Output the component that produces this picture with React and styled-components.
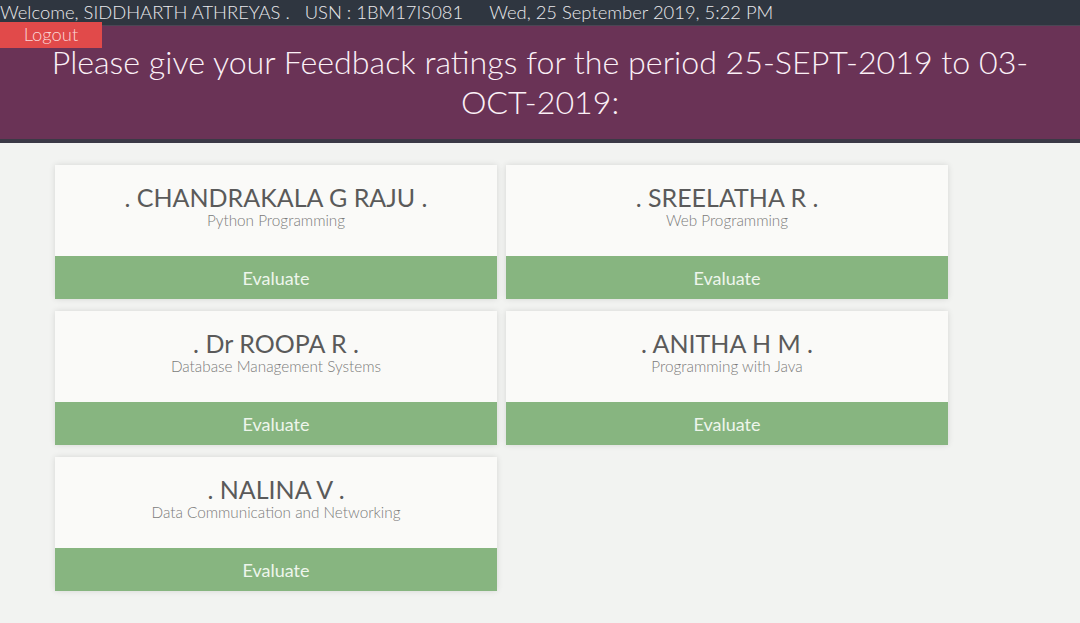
import styled, { createGlobalStyle } from 'styled-components';

const GlobalStyle = createGlobalStyle`
  html, body {
    margin: 0;
    padding: 0;
    background: #f2f3f1;
    font-family: Lato, "Open Sans", sans-serif;
  }
`;

const faculty = [
  { name: 'CHANDRAKALA G RAJU', subject: 'Python Programming' },
  { name: 'SREELATHA R', subject: 'Web Programming' },
  { name: 'Dr ROOPA R', subject: 'Database Management Systems' },
  { name: 'ANITHA H M', subject: 'Programming with Java' },
  { name: 'NALINA V', subject: 'Data Communication and Networking' },
];

const App = () => {
  return (
    <Page>
      <GlobalStyle />
      <TopBar>
        <span>Welcome, SIDDHARTH ATHREYAS .&nbsp;&nbsp; USN : 1BM17IS081</span>
        <DateText>Wed, 25 September 2019, 5:22 PM</DateText>
      </TopBar>
      <Banner>
        <LogoutButton>Logout</LogoutButton>
        <Title>Please give your Feedback ratings for the period 25-SEPT-2019 to 03-OCT-2019:</Title>
      </Banner>
      <CardGrid>
        {faculty.map(f => (
          <Card key={f.name}>
            <CardBody>
              <Name>. {f.name} .</Name>
              <Subject>{f.subject}</Subject>
            </CardBody>
            <EvaluateButton>Evaluate</EvaluateButton>
          </Card>
        ))}
      </CardGrid>
    </Page>
  );
};

const Page = styled.div`
  min-height: 100vh;
  background: #f2f3f1;
`;

const TopBar = styled.div`
  display: flex;
  align-items: center;
  height: 26px;
  background: #2f3640;
  color: #e9e9ec;
  font-size: 18.4px;
  font-weight: 300;
  white-space: nowrap;
  line-height: 22px;
  padding-bottom: 2px;
  box-sizing: border-box;
  border-bottom: 1px solid #4a4654;
`;

const DateText = styled.span`
  margin-left: 26px;
`;

const Banner = styled.div`
  display: flow-root;
  background: #6a3356;
  border-bottom: 4px solid #3b3946;
  padding: 0 40px 12px;
  height: 117px;
  box-sizing: border-box;
`;

const LogoutButton = styled.button`
  display: block;
  width: 102px;
  height: 26px;
  margin: -4px 0 0 -40px;
  padding: 0 0 3px;
  border: none;
  background: #e14a4a;
  color: #fbd7d7;
  font-family: Lato, sans-serif;
  font-size: 18.4px;
  font-weight: 300;
  cursor: pointer;
`;

const Title = styled.h1`
  margin: -6px 0 0;
  text-align: center;
  color: #fbf0f6;
  font-size: 32.2px;
  font-weight: 300;
  line-height: 40px;
`;

const CardGrid = styled.div`
  display: grid;
  grid-template-columns: 442px 442px;
  column-gap: 9px;
  row-gap: 12px;
  padding: 22px 0 30px 55px;
`;

const Card = styled.div`
  display: flex;
  flex-direction: column;
  height: 134px;
  background: #fafaf8;
  box-shadow: 0 0 6px rgba(0, 0, 0, 0.12);
`;

const CardBody = styled.div`
  flex: 1;
  display: flex;
  flex-direction: column;
  align-items: center;
  padding-top: 18px;
  box-sizing: border-box;
`;

const Name = styled.div`
  color: #5a5a5a;
  font-size: 25px;
  line-height: 29px;
`;

const Subject = styled.div`
  color: #7a7a7a;
  font-size: 15.3px;
  font-weight: 300;
  line-height: 17px;
`;

const EvaluateButton = styled.div`
  height: 43px;
  display: flex;
  align-items: center;
  justify-content: center;
  background: #87b580;
  color: #eef5ec;
  font-size: 18px;
  cursor: pointer;
`;

export default App;
